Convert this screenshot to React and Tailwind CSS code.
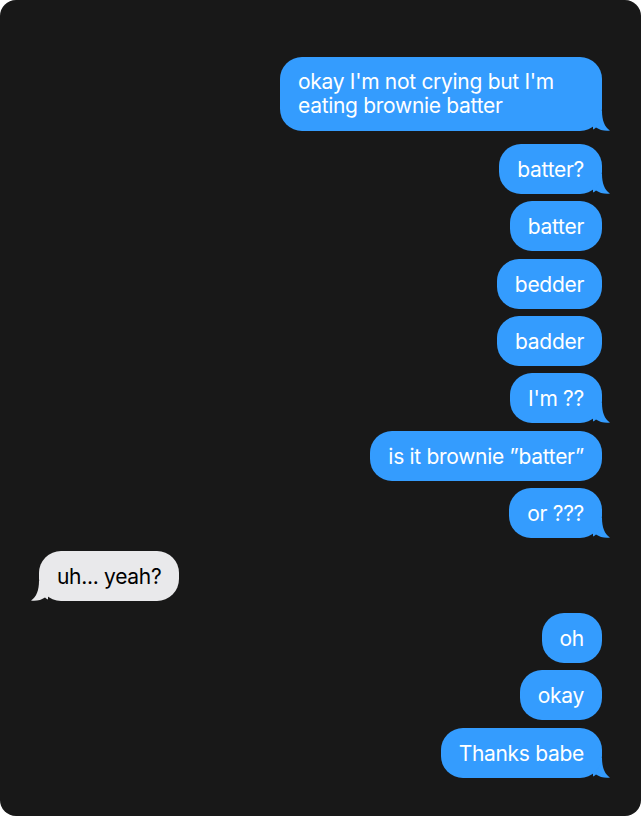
import React from 'react';

const messages = [
  { text: "okay I'm not crying but I'm eating brownie batter", me: true, tail: true, mt: 'mt-0', multi: true },
  { text: 'batter?', me: true, tail: true, mt: 'mt-[13px]' },
  { text: 'batter', me: true, mt: 'mt-[7px]' },
  { text: 'bedder', me: true, mt: 'mt-[8px]' },
  { text: 'badder', me: true, mt: 'mt-[7px]' },
  { text: "I'm ??", me: true, tail: true, mt: 'mt-[7px]' },
  { text: 'is it brownie \u201Dbatter\u201D', me: true, mt: 'mt-[8px]' },
  { text: 'or ???', me: true, tail: true, mt: 'mt-[7px]' },
  { text: 'uh... yeah?', me: false, tail: true, mt: 'mt-[13px]' },
  { text: 'oh', me: true, mt: 'mt-[12px]' },
  { text: 'okay', me: true, mt: 'mt-[7px]' },
  { text: 'Thanks babe', me: true, tail: true, mt: 'mt-[8px]' },
];

const Tail = ({ me }) => (
  <svg
    width="17"
    height="20"
    viewBox="0 0 17 20"
    className={me ? 'absolute -right-[8px] bottom-0' : 'absolute -left-[8px] bottom-0 -scale-x-100'}
  >
    <path
      d="M0 0 H9 C9 9 11.5 16 17 19.6 C12 20.4 6.5 19 3 16.5 C2 17.5 1 18 0 18.5 Z"
      fill={me ? '#349cfe' : '#e9e9eb'}
    />
  </svg>
);

const Bubble = ({ m }) => (
  <div className={`${m.mt} relative ${m.me ? 'self-end' : 'self-start'}`}>
    <div
      className={`relative z-10 rounded-[22px] px-[18px] text-[21px] tracking-[-0.3px] ${
        m.multi ? 'max-w-[322px] py-[13px] leading-[24px]' : 'h-[50px] flex items-center leading-[25px]'
      } ${m.me ? 'bg-[#349cfe] text-white' : 'bg-[#e9e9eb] text-black'}`}
    >
      {m.text}
    </div>
    {m.tail && <Tail me={m.me} />}
  </div>
);

export default function App() {
  return (
    <div className="w-[641px] h-[816px] bg-white" style={{ fontFamily: 'Inter, "Noto Sans", sans-serif' }}>
      <div className="w-full h-full rounded-[16px] bg-[#181818] flex flex-col pt-[57px] pl-[39px] pr-[39px]">
        {messages.map((m, i) => (
          <Bubble key={i} m={m} />
        ))}
      </div>
    </div>
  );
}
